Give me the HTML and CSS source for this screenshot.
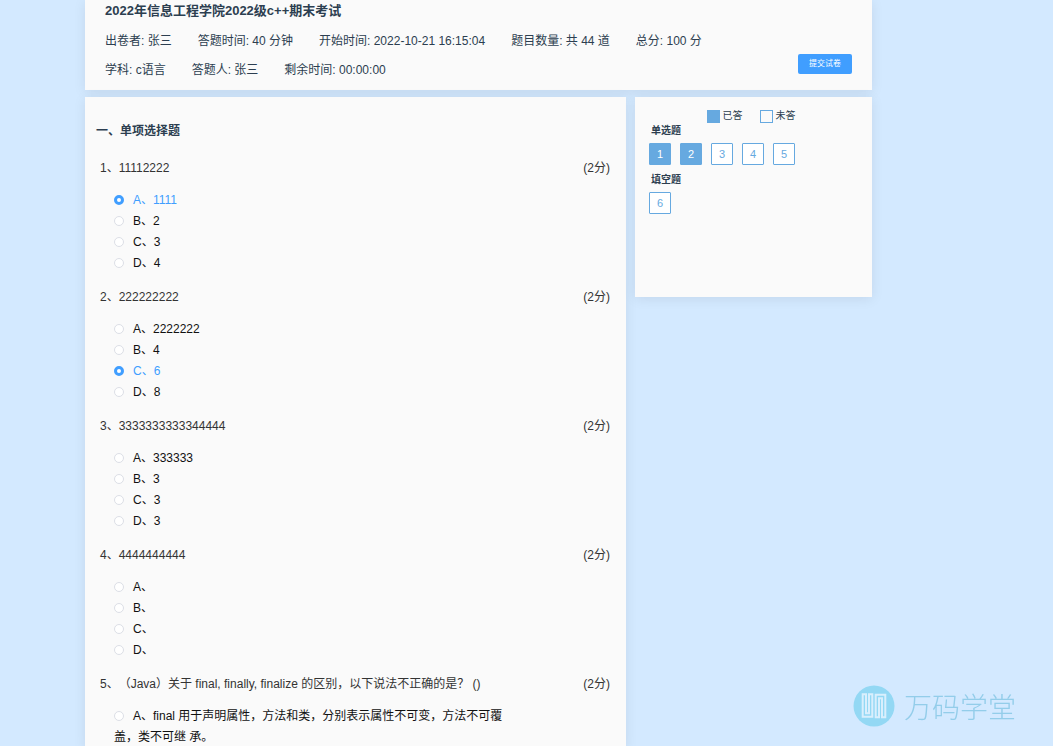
FILE: index.html
```html
<!DOCTYPE html>
<html lang="zh-CN">
<head>
<meta charset="utf-8">
<meta name="viewport" content="width=device-width, initial-scale=1">
<title>2022年信息工程学院2022级c++期末考试</title>
<link rel="stylesheet" href="styles.css">
</head>
<body>
<div class="page">
  <header class="card exam-header">
    <div class="exam-info">
      <h1 class="exam-title">2022年信息工程学院2022级c++期末考试</h1>
      <div class="info-row"><span>出卷者: 张三</span><span>答题时间: 40 分钟</span><span>开始时间: 2022-10-21 16:15:04</span><span>题目数量: 共 44 道</span><span>总分: 100 分</span></div>
      <div class="info-row"><span>学科: c语言</span><span>答题人: 张三</span><span>剩余时间: 00:00:00</span></div>
    </div>
    <button class="submit" type="button">提交试卷</button>
  </header>

  <div class="columns">
    <main class="card paper">
      <h2 class="section-title">一、单项选择题</h2>

      <section class="question">
        <div class="stem"><span>1、11112222</span><span>(2分)</span></div>
        <div class="options">
          <label class="option"><input type="radio" name="q1" checked><span>A、1111</span></label>
          <label class="option"><input type="radio" name="q1"><span>B、2</span></label>
          <label class="option"><input type="radio" name="q1"><span>C、3</span></label>
          <label class="option"><input type="radio" name="q1"><span>D、4</span></label>
        </div>
      </section>

      <section class="question">
        <div class="stem"><span>2、222222222</span><span>(2分)</span></div>
        <div class="options">
          <label class="option"><input type="radio" name="q2"><span>A、2222222</span></label>
          <label class="option"><input type="radio" name="q2"><span>B、4</span></label>
          <label class="option"><input type="radio" name="q2" checked><span>C、6</span></label>
          <label class="option"><input type="radio" name="q2"><span>D、8</span></label>
        </div>
      </section>

      <section class="question">
        <div class="stem"><span>3、3333333333344444</span><span>(2分)</span></div>
        <div class="options">
          <label class="option"><input type="radio" name="q3"><span>A、333333</span></label>
          <label class="option"><input type="radio" name="q3"><span>B、3</span></label>
          <label class="option"><input type="radio" name="q3"><span>C、3</span></label>
          <label class="option"><input type="radio" name="q3"><span>D、3</span></label>
        </div>
      </section>

      <section class="question">
        <div class="stem"><span>4、4444444444</span><span>(2分)</span></div>
        <div class="options">
          <label class="option"><input type="radio" name="q4"><span>A、</span></label>
          <label class="option"><input type="radio" name="q4"><span>B、</span></label>
          <label class="option"><input type="radio" name="q4"><span>C、</span></label>
          <label class="option"><input type="radio" name="q4"><span>D、</span></label>
        </div>
      </section>

      <section class="question">
        <div class="stem"><span>5、（Java）关于 final, finally, finalize 的区别，以下说法不正确的是？ ()</span><span>(2分)</span></div>
        <div class="options">
          <label class="option"><input type="radio" name="q5"><span>A、final 用于声明属性，方法和类，分别表示属性不可变，方法不可覆盖，类不可继 承。</span></label>
        </div>
      </section>
    </main>

    <aside class="card sheet">
      <div class="legend">
        <span class="legend-item"><i class="swatch done"></i>已答</span>
        <span class="legend-item"><i class="swatch"></i>未答</span>
      </div>
      <section class="group">
        <h3 class="group-title">单选题</h3>
        <div class="numbers">
          <button class="number done" type="button">1</button>
          <button class="number done" type="button">2</button>
          <button class="number" type="button">3</button>
          <button class="number" type="button">4</button>
          <button class="number" type="button">5</button>
        </div>
      </section>
      <section class="group">
        <h3 class="group-title">填空题</h3>
        <div class="numbers">
          <button class="number" type="button">6</button>
        </div>
      </section>
    </aside>
  </div>
</div>

<div class="watermark">
  <svg class="watermark-logo" viewBox="0 0 42 42" aria-hidden="true">
    <circle cx="21" cy="21" r="20.5" fill="#93d8f4"/>
    <path d="M9.7 9.3V31.8H19.3V9.3H16V28.3H13V9.3ZM22.7 32.2V9.7H32.3V32.2H29V13.2H26V32.2Z" fill="none" stroke="#d9effd" stroke-width="2"/>
  </svg>
  <span>万码学堂</span>
</div>
</body>
</html>
```
FILE: styles.css
```css
* {
  box-sizing: border-box;
}

body {
  margin: 0;
  background: #d3e9ff;
  color: #2c3e50;
  font: 12px/21px "Liberation Sans", "Noto Sans CJK SC", sans-serif;
  text-spacing-trim: space-all;
}

h1, h2, h3 {
  margin: 0;
}

button {
  padding: 0;
  font-family: inherit;
  cursor: pointer;
}

.page {
  display: flex;
  flex-direction: column;
  gap: 7px;
  min-height: 100vh;
  padding: 0 181px 0 85px;
}

.card {
  background: #fafafa;
  box-shadow: 0 2px 12px rgba(0, 0, 0, 0.08);
}

.exam-header {
  display: flex;
  align-items: flex-end;
  justify-content: space-between;
  padding: 0 20px 5px;
}

.exam-title {
  margin-bottom: 5px;
  font-size: 13px;
  line-height: 22px;
}

.info-row {
  display: flex;
  flex-wrap: wrap;
  column-gap: 26px;
  line-height: 29px;
}

.submit {
  width: 54px;
  height: 20px;
  margin-bottom: 11px;
  border: 0;
  border-radius: 2px;
  background: #409eff;
  color: #fff;
  font-size: 8px;
  line-height: 20px;
}

.columns {
  display: flex;
  flex: 1;
  align-items: flex-start;
  gap: 9px;
}

.paper {
  flex: 1;
  align-self: stretch;
  padding: 22px 16px 0 15px;
}

.section-title {
  margin: 0 0 13px -4px;
  font-size: 12px;
  line-height: 24px;
}

.question + .question {
  margin-top: 11px;
}

.stem {
  display: flex;
  justify-content: space-between;
  margin-bottom: 10px;
  color: #333;
  line-height: 24px;
}

.options {
  max-width: 404px;
  padding-left: 14px;
  color: #111;
}

.option {
  display: block;
}

.option input {
  width: 10px;
  height: 10px;
  margin: 0 9px 0 0;
  border: 1px solid #dcdfe6;
  border-radius: 50%;
  appearance: none;
  background: #fff;
  vertical-align: -1px;
}

.option input:checked {
  border: 3px solid #409eff;
}

.option input:checked + span {
  color: #409eff;
}

.sheet {
  flex: 0 0 237px;
  min-height: 200px;
  padding: 12px 14px;
}

.legend {
  display: flex;
  justify-content: center;
  gap: 17px;
  padding-right: 5px;
  font-size: 10px;
  line-height: 14px;
}

.legend-item {
  display: flex;
  align-items: center;
  gap: 3px;
}

.swatch {
  width: 13px;
  height: 13px;
  border: 1px solid #66a9e0;
}

.group + .group {
  margin-top: 8px;
}

.group-title {
  margin: 0 2px 5px;
  padding-top: 1px;
  font-size: 10px;
  line-height: 14px;
}

.group + .group .group-title {
  padding-top: 0;
}

.numbers {
  display: flex;
  flex-wrap: wrap;
  gap: 9px;
}

.number {
  width: 22px;
  height: 22px;
  border: 1px solid #66a9e0;
  border-radius: 1px;
  background: #fff;
  color: #66a9e0;
  font-size: 11px;
}

.done {
  background: #66a9e0;
  color: #fff;
}

.watermark {
  position: fixed;
  right: 37px;
  bottom: 19px;
  display: flex;
  align-items: center;
  gap: 9px;
  color: #93cdea;
  font: 300 28px/42px "Noto Sans CJK SC", sans-serif;
}

.watermark-logo {
  width: 42px;
  height: 42px;
}
```
